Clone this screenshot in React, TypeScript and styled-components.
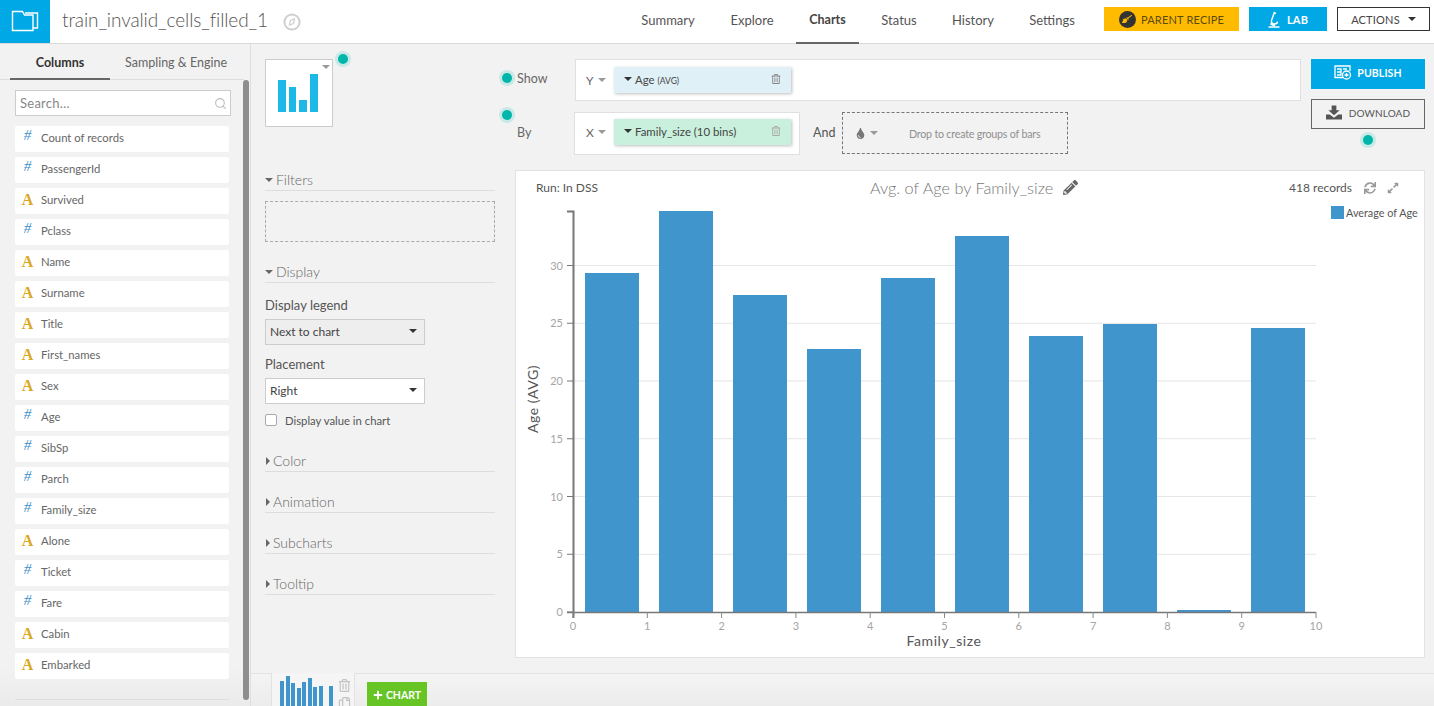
import React from "react";
import styled, { createGlobalStyle } from "styled-components";
import { FaPencilAlt, FaSync, FaExpandAlt, FaRegTrashAlt, FaTint, FaBroom, FaPlus, FaRegCopy } from "react-icons/fa";
import { Search } from "lucide-react";

const Global = createGlobalStyle`
  html, body { margin: 0; padding: 0; height: 100%; overflow: hidden; background: #f2f2f2; }
  body { font-family: "Lato", "Open Sans", sans-serif; color: #333; }
  * { box-sizing: border-box; }
`;

const Page = styled.div`width: 1434px; height: 706px; display: flex; flex-direction: column; overflow: hidden;`;

const Header = styled.header`height: 44px; flex: none; display: flex; align-items: flex-start; background: #fff; border-bottom: 1px solid #d9d9d9;`;
const Logo = styled.div`width: 50px; height: 43px; background: #00a8e6; display: flex; align-items: center; justify-content: center; padding-bottom: 2px;`;
const Title = styled.h1`margin: 8px 15px 0 12px; font-size: 19px; line-height: 24px; font-weight: 300; color: #555; letter-spacing: -0.1px;`;
const CompassWrap = styled.span`display: flex; margin-top: 13px;`;
const Nav = styled.nav`margin-left: auto; display: flex; align-items: stretch; height: 44px;`;
const NavItem = styled.a<{ $active?: boolean; $w: number; $ml?: number }>`
  width: ${p => p.$w}px; margin-left: ${p => p.$ml ?? 0}px; display: flex; align-items: center; justify-content: center; padding-bottom: 3px;
  font-size: ${p => (p.$active ? 12.5 : 13)}px; color: ${p => (p.$active ? "#444" : "#555")}; font-weight: ${p => (p.$active ? 700 : 400)};
  border-bottom: 2px solid ${p => (p.$active ? "#666" : "transparent")};
`;
const HeadBtns = styled.div`display: flex; gap: 10px; margin: 7px 4px 0 11px; align-items: center;`;
const HeadBtn = styled.button<{ $bg: string; $fg: string; $w: number; $bd?: string; $gap?: number }>`
  width: ${p => p.$w}px; height: 24px; background: ${p => p.$bg}; color: ${p => p.$fg};
  border: ${p => (p.$bd ? `1px solid ${p.$bd}` : "none")}; font: 400 11px "Lato", sans-serif; letter-spacing: .2px;
  display: flex; align-items: center; justify-content: center; gap: ${p => p.$gap ?? 5}px; padding: 0;
`;
const BroomBadge = styled.span`width: 17px; height: 17px; border-radius: 50%; background: #333; display: flex; align-items: center; justify-content: center;`;
const Caret = styled.span<{ $c?: string; $s?: number }>`
  display: inline-block; width: 0; height: 0; flex: none;
  border-left: ${p => p.$s ?? 4}px solid transparent; border-right: ${p => p.$s ?? 4}px solid transparent;
  border-top: ${p => p.$s ?? 4}px solid ${p => p.$c ?? "#333"};
`;

const Body = styled.div`flex: 1; display: flex; min-height: 0;`;
const Sidebar = styled.aside`width: 251px; flex: none; border-right: 1px solid #dedede; display: flex; position: relative; background: linear-gradient(#f2f2f2 calc(100% - 40px), #ebebeb);`;
const SideInner = styled.div`width: 244px; display: flex; flex-direction: column;`;
const Tabs = styled.div`height: 36px; flex: none; display: flex; border-bottom: 1px solid #dedede; padding-left: 10px;`;
const Tab = styled.div<{ $active?: boolean; $w: number }>`
  width: ${p => p.$w}px; height: 36px; display: flex; align-items: center; justify-content: center; font-size: 12.5px; padding-top: 3px;
  color: ${p => (p.$active ? "#333" : "#666")}; font-weight: ${p => (p.$active ? 700 : 400)};
  border-bottom: 2px solid ${p => (p.$active ? "#666" : "transparent")};
`;
const SearchBox = styled.div`margin: 10px 13px 10px 15px; height: 26px; border: 1px solid #ccc; background: #fff; display: flex; align-items: center; justify-content: space-between; padding: 0 3px 0 4px; font-size: 13px; letter-spacing: .25px; color: #888;`;
const ColList = styled.ul`list-style: none; margin: 0; padding: 0 15px; display: flex; flex-direction: column; gap: 5.05px;`;
const ColRow = styled.li`height: 25.95px; background: #fff; border-radius: 2px; display: flex; align-items: center; font-size: 11.3px; color: #666; padding-bottom: 2px;`;
const TypeIcon = styled.span<{ $kind: string }>`
  width: 26px; text-align: center; padding-right: 1px; flex: none; font-family: "Liberation Serif", serif;
  font-size: ${p => (p.$kind === "#" ? 15 : 16)}px; font-weight: ${p => (p.$kind === "#" ? 400 : 700)};
  font-style: ${p => (p.$kind === "#" ? "italic" : "normal")}; color: ${p => (p.$kind === "#" ? "#3d8fcb" : "#dba81f")};
  position: relative; top: ${p => (p.$kind === "#" ? -2 : 0)}px;
`;
const SideFoot = styled.div`margin: 20px 15px 0; border-top: 1px solid #dedede;`;
const Scroll = styled.div`position: absolute; right: 1px; top: 36px; width: 6px; bottom: 6px; background: #8e8e8e; border-radius: 3px;`;

const Work = styled.div`flex: 1; display: flex; flex-direction: column; min-width: 0;`;
const WorkTop = styled.div`flex: 1; display: flex; min-height: 0; padding: 15px 9px 0 14px;`;
const Options = styled.div`width: 230px; flex: none; position: relative;`;
const TypeBox = styled.div`width: 68px; height: 68px; background: #fff; border: 1px solid #ccc; position: relative; display: flex; align-items: center; justify-content: center; margin-bottom: 44px;`;
const TypeCaret = styled.span`position: absolute; top: 5px; right: 2px; display: flex;`;
const Dot = styled.span`position: absolute; width: 10px; height: 10px; border-radius: 50%; background: #00b5a9; box-shadow: 0 0 0 3px #c9e9e7; z-index: 2;`;
const Section = styled.section<{ $mb?: number }>`margin-bottom: ${p => p.$mb ?? 0}px;`;
const SectionHead = styled.div`height: 20px; display: flex; align-items: center; gap: 3px; font-size: 14px; font-weight: 300; color: #666; border-bottom: 1px solid #ddd; padding-bottom: 2px;`;
const RightCaret = styled.span`width: 0; height: 0; margin-left: 1px; border-top: 4px solid transparent; border-bottom: 4px solid transparent; border-left: 4px solid #666;`;
const DropArea = styled.div`margin-top: 10px; height: 41px; border: 1px dashed #aaa;`;
const FieldLabel = styled.div<{ $mt: number }>`font-size: 13px; color: #555; height: 17px; display: flex; align-items: center; margin-top: ${p => p.$mt}px;`;
const Select = styled.div<{ $muted?: boolean }>`
  width: 160px; height: 26px; margin-top: 6px; border: 1px solid #ccc; background: ${p => (p.$muted ? "#eee" : "#fff")};
  display: flex; align-items: center; justify-content: space-between; padding: 0 7px 2px 4px; font-size: 12px; color: #444;
`;
const CheckRow = styled.label`display: flex; align-items: center; gap: 8px; margin-top: 8px; font-size: 11.3px; color: #555; height: 16px;`;
const Check = styled.span`width: 12px; height: 12px; border: 1px solid #aaa; border-radius: 2px; background: #fff;`;
const CollapsedHead = styled(SectionHead)<{ $mt?: number }>`margin-top: ${p => p.$mt ?? 0}px;`;

const Right = styled.div`flex: 1; margin-left: 20px; min-width: 0; position: relative;`;
const Controls = styled.div`display: flex; justify-content: space-between; height: 111px;`;
const Dims = styled.div`width: 786px; display: flex; flex-direction: column; gap: 11px;`;
const DimRow = styled.div`display: flex; align-items: flex-start; position: relative;`;
const DimLabel = styled.div<{ $mt: number; $w: number }>`width: ${p => p.$w}px; padding-left: 2px; margin-top: ${p => p.$mt}px; font-size: 12.5px; color: #666; flex: none;`;
const DimBox = styled.div<{ $w: number; $h: number; $pl: number; $pt: number }>`
  width: ${p => p.$w}px; height: ${p => p.$h}px; background: #fff; border: 1px solid #e0e0e0;
  display: flex; align-items: flex-start; padding: ${p => p.$pt}px 0 0 ${p => p.$pl}px; flex: none;
`;
const Axis = styled.span`width: 28px; height: 26px; display: flex; align-items: center; gap: 4px; font-size: 12px; color: #666; flex: none;`;
const Pill = styled.div<{ $bg: string }>`
  width: 177px; height: 26px; background: ${p => p.$bg}; box-shadow: 1px 1px 3px rgba(0,0,0,.25);
  display: flex; align-items: center; padding: 0 10px 2px; gap: 3px; font-size: 11.4px; color: #444;
`;
const Small = styled.span`font-size: 8.5px;`;
const Trash = styled.span`margin-left: auto; display: flex; color: #888;`;
const And = styled.span`margin: 15px 0 0 13px; width: 29px; font-size: 12.5px; color: #555; flex: none; line-height: 1;`;
const DashedDrop = styled.div`width: 226px; height: 42px; border: 1px dashed #777; display: flex; align-items: center; padding-left: 12px; flex: none; font-size: 10.7px; color: #8f8f8f; gap: 4px;`;
const DropText = styled.span`margin-left: 27px; letter-spacing: -.02em;`;
const Actions = styled.div`width: 114px; display: flex; flex-direction: column; gap: 10px; position: relative; flex: none;`;
const ActionBtn = styled.button<{ $primary?: boolean }>`
  width: 114px; height: 30px; padding: 0 0 3px; display: flex; align-items: center; justify-content: center; gap: ${p => (p.$primary ? 5 : 7)}px;
  background: ${p => (p.$primary ? "#00a8e6" : "#f2f2f2")}; color: ${p => (p.$primary ? "#fff" : "#555")};
  border: ${p => (p.$primary ? "none" : "1px solid #666")};
  font: ${p => (p.$primary ? 700 : 400)} ${p => (p.$primary ? 10.5 : 10)}px "Lato", sans-serif; letter-spacing: .1px;
`;

const Card = styled.div`width: 910px; height: 488px; background: #fff; border: 1px solid #e2e2e2; display: flex; flex-direction: column;`;
const CardHead = styled.div`height: 33px; flex: none; display: flex; align-items: center; padding: 0 25px 0 20px; position: relative;`;
const RunLabel = styled.span`font-size: 12px; color: #555; width: 334px; flex: none;`;
const ChartTitle = styled.span`font-size: 16.3px; font-weight: 300; color: #777; display: flex; align-items: center; gap: 10px;`;
const Records = styled.span`margin-left: auto; font-size: 12px; color: #555; display: flex; align-items: center; gap: 12px;`;
const RecIcons = styled.span`display: flex; align-items: center; gap: 11px; color: #999;`;
const ChartSvg = styled.svg`display: block; width: 908px; height: 453px;`;
const Tick = styled.text`font: 11px "Lato", sans-serif; fill: #a5a5a5;`;
const AxisName = styled.text`font: 14px "Lato", sans-serif; fill: #555; letter-spacing: .55px;`;
const Legend = styled.text`font: 10.8px "Lato", sans-serif; fill: #555;`;

const Bottom = styled.div`height: 33px; flex: none; border-top: 1px solid #e2e2e2; display: flex; padding-left: 20px; background: linear-gradient(#f4f4f4, #ececec);`;
const Thumb = styled.div`width: 84px; height: 33px; background: #f5f5f5; border-left: 1px solid #e2e2e2; border-right: 1px solid #e2e2e2; display: flex; margin-top: -1px; overflow: hidden; padding-left: 8px; position: relative;`;
const ThumbTools = styled.div`position: absolute; right: 3px; top: 6px; display: flex; flex-direction: column; gap: 5px; color: #c4c4c4;`;
const AddChart = styled.button`margin: 8px 0 0 12px; width: 60px; height: 25px; border: none; padding: 0; background: #66c525; color: #fff; font: 700 10.5px "Lato", sans-serif; display: flex; align-items: center; justify-content: center; gap: 3px;`;

const columns: [string, string][] = [
  ["#", "Count of records"], ["#", "PassengerId"], ["A", "Survived"], ["#", "Pclass"], ["A", "Name"], ["A", "Surname"],
  ["A", "Title"], ["A", "First_names"], ["A", "Sex"], ["#", "Age"], ["#", "SibSp"], ["#", "Parch"], ["#", "Family_size"],
  ["A", "Alone"], ["#", "Ticket"], ["#", "Fare"], ["A", "Cabin"], ["A", "Embarked"],
];
const nav: [string, number, number][] = [["Summary", 90, 0], ["Explore", 78, 0], ["Charts", 63, 5], ["Status", 72, 4], ["History", 76, 0], ["Settings", 82, 0]];
const tops = [273, 211, 295, 349, 278, 236, 336, 324, 610, 328];
const ox = 516, oy = 204; // page offset of the chart drawing
const x0 = 573 - ox, y0 = 612 - oy, ux = 74.3, uy = 11.55;

const FolderIcon = () => (
  <svg width="28" height="24" viewBox="0 0 28 24" fill="none" stroke="#fff" strokeWidth="1.4">
    <path d="M14 4H26.5V19H22" />
    <path d="M1.5 21.5V2.5H11.5L13.5 6H22V21.5Z" />
  </svg>
);
const MicroIcon = () => (
  <svg width="12" height="17" viewBox="0 0 12 17" fill="none" stroke="#fff" strokeWidth="1.4">
    <path d="M.5 16H11.5M6.5 1L3.5 9.5C3 11.5 4.5 13 6.5 13C8 13 9.5 12 9.5 10.5M5.5 1.5L8 2.5M2.5 12.5C3.5 14 5 14.5 7 14.5" />
  </svg>
);
const PublishIcon = () => (
  <svg width="18" height="15" viewBox="0 0 18 15" fill="none" stroke="#fff" strokeWidth="1.3">
    <path d="M9 12.5H1V1H16V6M3 4H7V10H3M3 7H7M9 4H13" />
    <circle cx="12.5" cy="10" r="4" /><path d="M10.5 10H14.5M12.5 8V12" />
  </svg>
);
const DownloadIcon = () => (
  <svg width="16" height="15" viewBox="0 0 17 15" fill="#555">
    <path d="M6 0H11V5H14.5L8.5 10.5L2.5 5H6Z" /><path d="M0 9.5H4L8.5 13L13 9.5H17V15H0Z" />
  </svg>
);
const CompassIcon = () => (
  <svg width="18" height="18" viewBox="0 0 18 18" fill="none" stroke="#cfcfcf" strokeWidth="2">
    <circle cx="9" cy="9" r="7.6" /><path d="M11.5 6L10.5 10.5L6.5 12L7.5 7.5Z" strokeWidth="1.2" />
  </svg>
);
const BarGlyph = () => (
  <svg width="42" height="40" viewBox="0 0 42 40" fill="#1cb8e8">
    <rect x="0" y="7" width="8" height="32" /><rect x="11" y="14" width="7" height="25" />
    <rect x="21" y="27" width="8" height="12" /><rect x="32" y="1" width="8" height="38" />
  </svg>
);

export default function App() {
  return (
    <Page>
      <Global />
      <Header>
        <Logo><FolderIcon /></Logo>
        <Title>train_invalid_cells_filled_1</Title>
        <CompassWrap><CompassIcon /></CompassWrap>
        <Nav>
          {nav.map(([n, w, ml]) => <NavItem key={n} $w={w} $ml={ml} $active={n === "Charts"}>{n}</NavItem>)}
        </Nav>
        <HeadBtns>
          <HeadBtn $bg="#ffbb00" $fg="#5a4a10" $w={135}>
            <BroomBadge><FaBroom size={10} color="#ffbb00" /></BroomBadge>PARENT RECIPE
          </HeadBtn>
          <HeadBtn $bg="#00a8e6" $fg="#fff" $w={78} $gap={7}><MicroIcon /><b>LAB</b></HeadBtn>
          <HeadBtn $bg="#fff" $fg="#444" $w={93} $bd="#333" $gap={8}>ACTIONS <Caret $s={4} /></HeadBtn>
        </HeadBtns>
      </Header>
      <Body>
        <Sidebar>
          <SideInner>
            <Tabs>
              <Tab $active $w={100}>Columns</Tab>
              <Tab $w={132}>Sampling &amp; Engine</Tab>
            </Tabs>
            <SearchBox>Search…<Search size={13} color="#bbb" /></SearchBox>
            <ColList>
              {columns.map(([k, n]) => (
                <ColRow key={n}><TypeIcon $kind={k}>{k}</TypeIcon>{n}</ColRow>
              ))}
            </ColList>
            <SideFoot />
          </SideInner>
          <Scroll />
        </Sidebar>
        <Work>
          <WorkTop>
            <Options>
              <TypeBox>
                <BarGlyph />
                <TypeCaret><Caret $c="#999" $s={4} /></TypeCaret>
              </TypeBox>
              <Dot style={{ left: 73, top: -5 }} />
              <Section $mb={21}>
                <SectionHead><Caret $c="#666" />Filters</SectionHead>
                <DropArea />
              </Section>
              <Section>
                <SectionHead><Caret $c="#666" />Display</SectionHead>
                <FieldLabel $mt={13}>Display legend</FieldLabel>
                <Select $muted>Next to chart<Caret /></Select>
                <FieldLabel $mt={10}>Placement</FieldLabel>
                <Select>Right<Caret /></Select>
                <CheckRow><Check />Display value in chart</CheckRow>
              </Section>
              <Section $mb={21}><CollapsedHead $mt={24}><RightCaret />Color</CollapsedHead></Section>
              <Section $mb={21}><CollapsedHead><RightCaret />Animation</CollapsedHead></Section>
              <Section $mb={21}><CollapsedHead><RightCaret />Subcharts</CollapsedHead></Section>
              <Section><CollapsedHead><RightCaret />Tooltip</CollapsedHead></Section>
            </Options>
            <Right>
              <Controls>
                <Dims>
                  <DimRow>
                    <Dot style={{ left: -13, top: 14 }} />
                    <DimLabel $mt={12} $w={60}>Show</DimLabel>
                    <DimBox $w={726} $h={42} $pl={10} $pt={7}>
                      <Axis>Y <Caret $c="#999" /></Axis>
                      <Pill $bg="#dff0f7"><Caret $c="#333" /><span>Age <Small>(AVG)</Small></span><Trash><FaRegTrashAlt size={10} /></Trash></Pill>
                    </DimBox>
                  </DimRow>
                  <DimRow>
                    <Dot style={{ left: -13, top: -2 }} />
                    <DimLabel $mt={13} $w={59}>By</DimLabel>
                    <DimBox $w={226} $h={43} $pl={11} $pt={6}>
                      <Axis>X <Caret $c="#999" /></Axis>
                      <Pill $bg="#c9f0dc"><Caret $c="#333" />Family_size (10 bins)<Trash><FaRegTrashAlt size={10} color="#aaa" /></Trash></Pill>
                    </DimBox>
                    <And>And</And>
                    <DashedDrop><FaTint size={11} color="#777" /><Caret $c="#999" /><DropText>Drop to create groups of bars</DropText></DashedDrop>
                  </DimRow>
                </Dims>
                <Actions>
                  <ActionBtn $primary><PublishIcon />PUBLISH</ActionBtn>
                  <ActionBtn><DownloadIcon />DOWNLOAD</ActionBtn>
                  <Dot style={{ left: 52, top: 76 }} />
                </Actions>
              </Controls>
              <Card>
                <CardHead>
                  <RunLabel>Run: In DSS</RunLabel>
                  <ChartTitle>Avg. of Age by Family_size <FaPencilAlt size={15} color="#666" /></ChartTitle>
                  <Records>418 records
                    <RecIcons><FaSync size={12} /><FaExpandAlt size={12} /></RecIcons>
                  </Records>
                </CardHead>
                <ChartSvg viewBox="0 0 908 453">
                  {[5, 10, 15, 20, 25, 30].map(v => (
                    <line key={v} x1={x0} x2={x0 + 743} y1={y0 - v * uy} y2={y0 - v * uy} stroke="#e6e6e6" strokeWidth="1.2" />
                  ))}
                  {tops.map((t, i) => (
                    <rect key={i} x={585 - ox + i * 74} y={t - oy} width={54} height={612 - t} fill="#3c93cb" fillOpacity="0.98" />
                  ))}
                  <path d={`M${x0 - 6} ${211 - oy + 0.5}H${x0 + 0.5}V${y0 + 6}`} fill="none" stroke="#777" strokeWidth="2" />
                  <path d={`M${x0 - 6} ${y0 + 0.5}H${x0 + 743}`} fill="none" stroke="#777" strokeWidth="1.6" />
                  {[0, 5, 10, 15, 20, 25, 30].map(v => (
                    <g key={v}>
                      <line x1={x0 - 6} x2={x0} y1={y0 - v * uy} y2={y0 - v * uy} stroke="#777" />
                      <Tick x={x0 - 10} y={y0 - v * uy + 4} textAnchor="end">{v}</Tick>
                    </g>
                  ))}
                  {[0, 1, 2, 3, 4, 5, 6, 7, 8, 9, 10].map(v => (
                    <g key={v}>
                      <line x1={x0 + v * ux} x2={x0 + v * ux} y1={y0} y2={y0 + 6} stroke="#888" />
                      <Tick x={x0 + v * ux} y={y0 + 18} textAnchor="middle">{v}</Tick>
                    </g>
                  ))}
                  <AxisName x={x0 + 371} y={y0 + 34} textAnchor="middle">Family_size</AxisName>
                  <AxisName transform={`translate(${538 - ox} ${399 - oy}) rotate(-90)`} textAnchor="middle">Age (AVG)</AxisName>
                  <rect x={1331 - ox} y={206 - oy} width={13} height={13} fill="#3f95cc" />
                  <Legend x={1346 - ox} y={217 - oy}>Average of Age</Legend>
                </ChartSvg>
              </Card>
            </Right>
          </WorkTop>
          <Bottom>
            <Thumb>
              <svg width="58" height="36" viewBox="0 0 58 36" fill="#3f95cc">
                {[[0, 8], [6, 3], [11, 10], [17, 15], [22, 9], [28, 5], [33, 14], [39, 13], [49, 13]].map(([x, y], i) => (
                  <rect key={i} x={x} y={y} width="4" height={36 - y} />
                ))}
              </svg>
              <ThumbTools><FaRegTrashAlt size={13} /><FaRegCopy size={13} /></ThumbTools>
            </Thumb>
            <AddChart><FaPlus size={10} />CHART</AddChart>
          </Bottom>
        </Work>
      </Body>
    </Page>
  );
}
